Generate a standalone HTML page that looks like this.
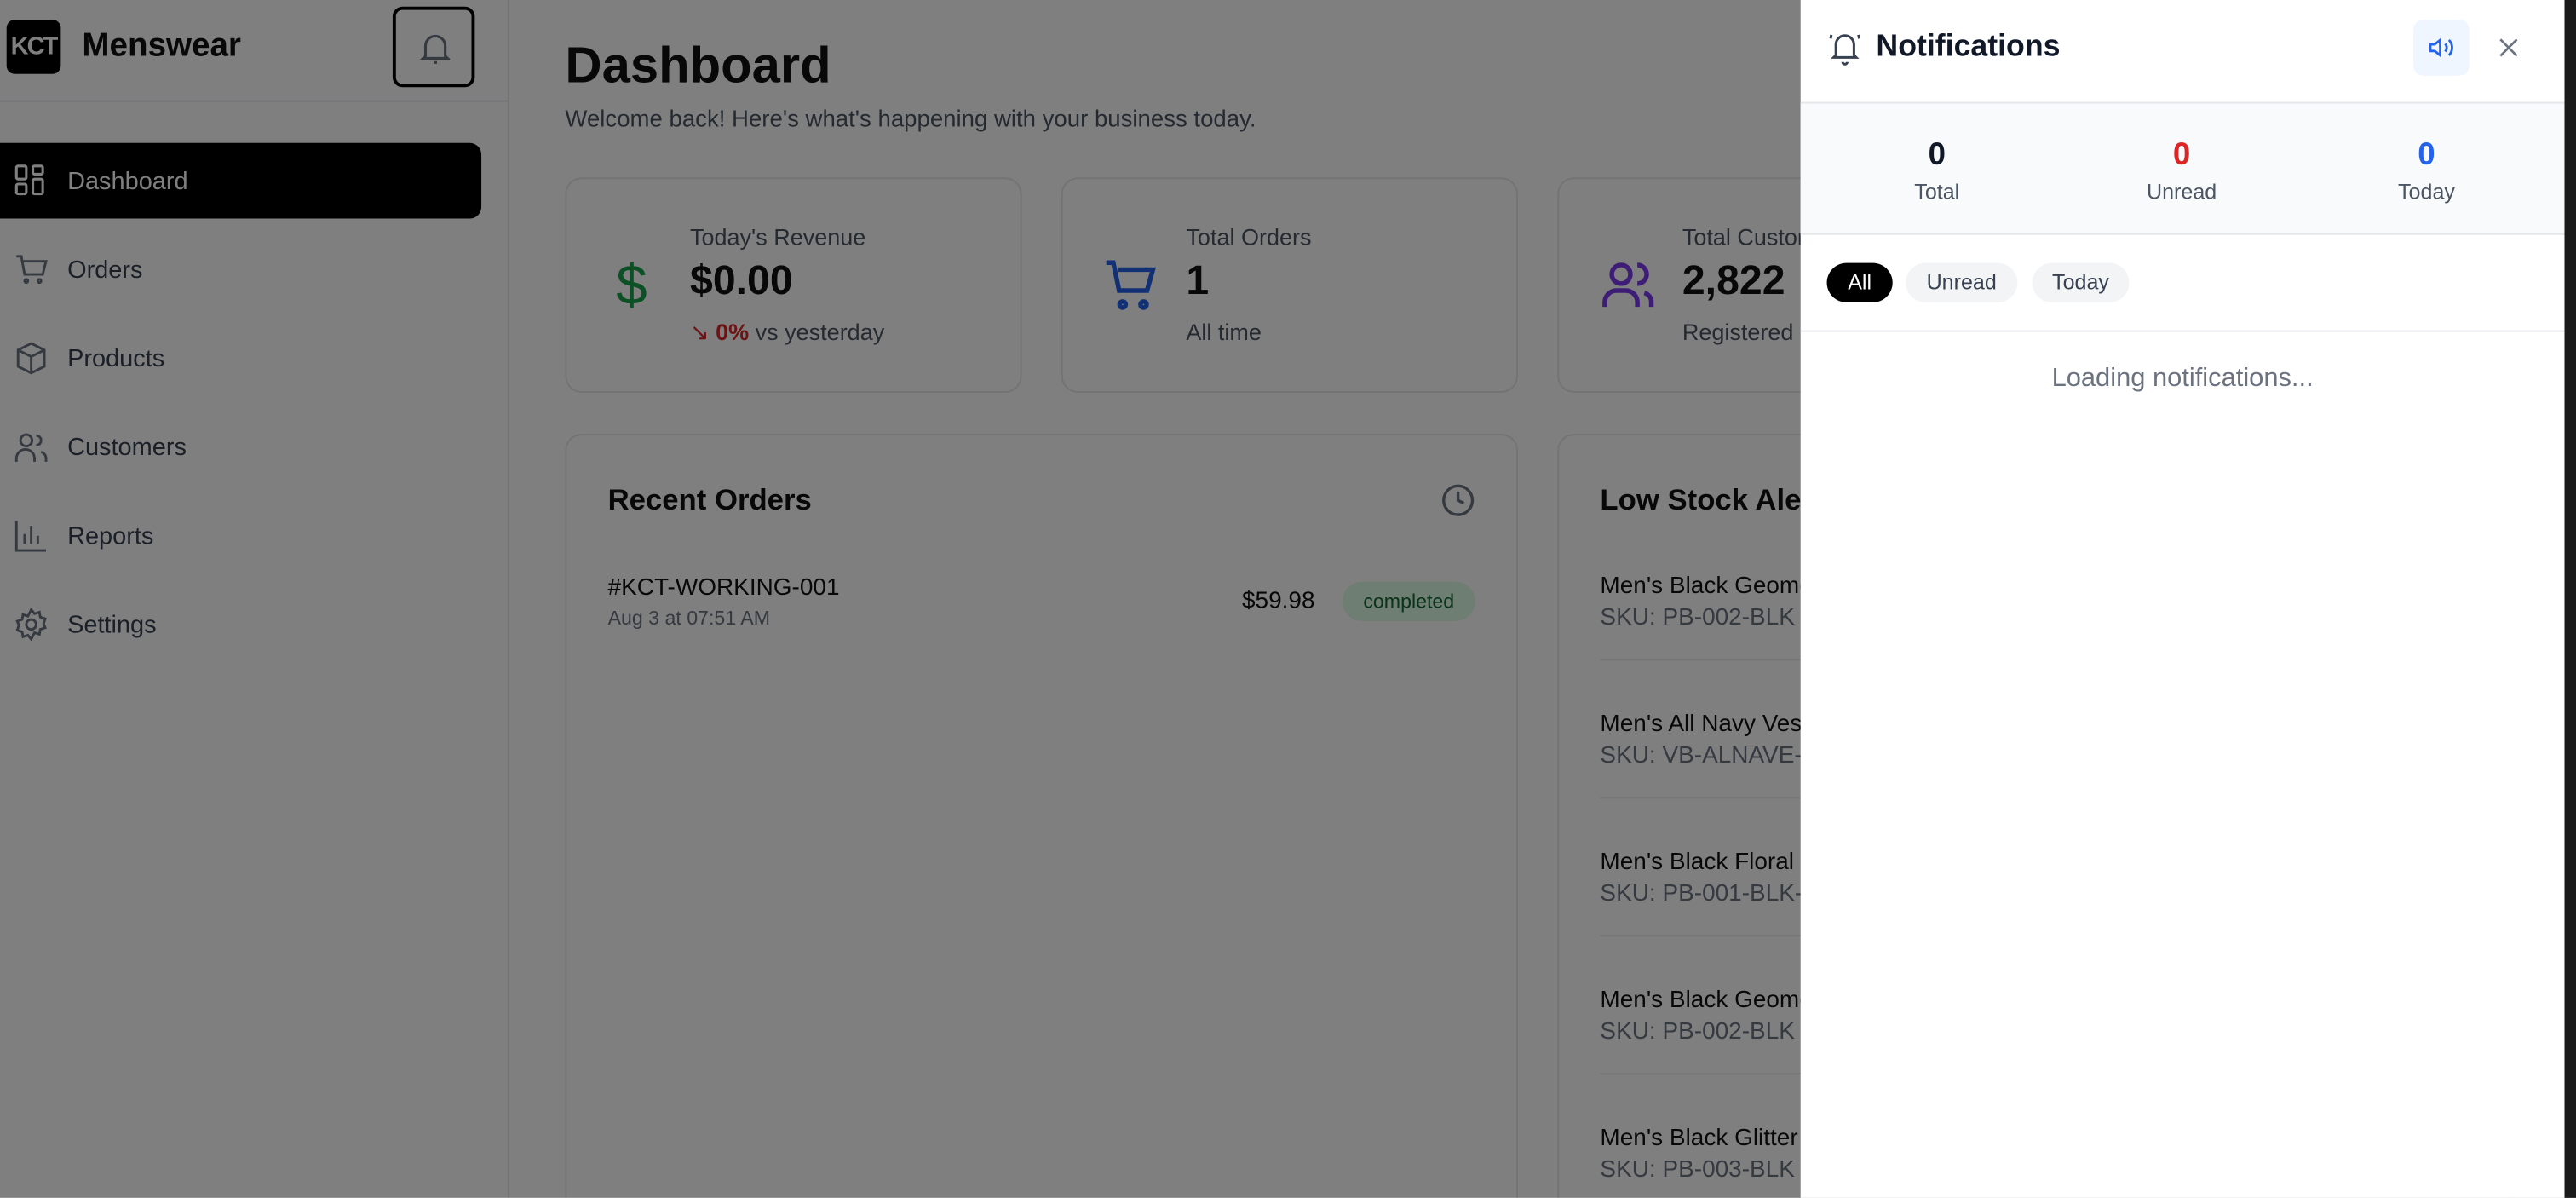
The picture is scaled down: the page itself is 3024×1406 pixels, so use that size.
<!DOCTYPE html>
<html><head><meta charset="utf-8"><style>
*{box-sizing:border-box;margin:0;padding:0}
html,body{width:3024px;height:1406px;overflow:hidden;background:#fff;font-family:"Liberation Sans",Arial,sans-serif}
#w{position:absolute;left:0;top:0;width:1568px;height:729px;transform:scale(1.928571);transform-origin:0 0;background:#fff;overflow:hidden}
.a{position:absolute}
.side{left:0;top:0;width:310px;height:729px;border-right:1px solid #e5e7eb;background:#fff}
.nav{position:absolute;left:0;width:293px;height:46px;display:flex;align-items:center;padding-left:41px;font-size:15px;color:#374151}
.nav svg{position:absolute;left:9px;top:13px}
.card{position:absolute;border:1px solid #e5e7eb;border-radius:10px;background:#fff}
.t1{font-size:14px;color:#4b5563}
.big{font-size:25px;font-weight:bold;color:#111}
.ls{position:absolute;left:974px;font-size:14.5px;color:#111}
.ls span{display:block;color:#6b7280;margin-top:3px}
.ln{position:absolute;left:974px;width:130px;height:1px;background:#e5e7eb}
</style></head><body><div id="w">
<div class="a side">
 <div class="a" style="left:4px;top:12px;width:33px;height:33px;background:#000;border-radius:5px;color:#fff;font-weight:bold;font-size:15px;line-height:33px;text-align:center;letter-spacing:-1px">KCT</div>
 <div class="a" style="left:50px;top:17px;font-size:20px;font-weight:bold;color:#111">Menswear</div>
 <div class="a" style="left:239px;top:4px;width:50px;height:49px;border:2px solid #000;border-radius:6px"><svg class="a" style="left:12px;top:11px" width="24" height="24" viewBox="0 0 24 24" fill="none" stroke="#6b7280" stroke-width="1.6"><path d="M6 17V11a6 6 0 0 1 12 0v6l1.5 1.5h-15z"/><path d="M11 21h2"/></svg></div>
 <div class="a" style="left:0;top:61px;width:310px;height:1px;background:#e5e7eb"></div>
 <div class="nav" style="top:87px;background:#000;color:#fff;border-radius:0 7px 7px 0"><svg width="20" height="20" viewBox="0 0 20 20" fill="none" stroke="#fff" stroke-width="1.6"><rect x="1" y="1" width="6" height="8" rx="1"/><rect x="11" y="1" width="6" height="5" rx="1"/><rect x="1" y="12" width="6" height="6" rx="1"/><rect x="11" y="9" width="6" height="9" rx="1"/></svg>Dashboard</div>
 <div class="nav" style="top:141px"><svg width="20" height="20" viewBox="0 0 20 20" fill="none" stroke="#6b7280" stroke-width="1.5"><path d="M1 2h3l2 11h11l2-8H5"/><circle cx="7" cy="17" r="1"/><circle cx="15" cy="17" r="1"/></svg>Orders</div>
 <div class="nav" style="top:195px"><svg width="20" height="20" viewBox="0 0 20 20" fill="none" stroke="#6b7280" stroke-width="1.5"><path d="M10 1l8 4v10l-8 4-8-4V5z M2 5l8 4 8-4 M10 9v10"/></svg>Products</div>
 <div class="nav" style="top:249px"><svg width="20" height="20" viewBox="0 0 20 20" fill="none" stroke="#6b7280" stroke-width="1.5"><circle cx="7" cy="6" r="3.5"/><path d="M1 19v-2a5 5 0 0 1 11 0v2M13 3a3 3 0 0 1 0 6M16 13a4 4 0 0 1 3 4v2"/></svg>Customers</div>
 <div class="nav" style="top:303px"><svg width="20" height="20" viewBox="0 0 20 20" fill="none" stroke="#6b7280" stroke-width="1.5"><path d="M1 1v18h18M6 15V9M10 15V4M14 15V10"/></svg>Reports</div>
 <div class="nav" style="top:357px"><svg width="20" height="20" viewBox="0 0 20 20" fill="none" stroke="#6b7280" stroke-width="1.5"><circle cx="10" cy="10" r="3"/><path d="M10 1l2 2.5 3-1 .5 3 3 1-1 3 1 2.5-3 1-.5 3-3-1L10 19l-2-2.5-3 1-.5-3-3-1 1-3-1-2.5 3-1 .5-3 3 1z"/></svg>Settings</div>
</div>
<div class="a" style="left:344px;top:22px;font-size:31px;font-weight:bold;color:#111">Dashboard</div>
<div class="a" style="left:344px;top:65px;font-size:14.3px;color:#4b5563">Welcome back! Here's what's happening with your business today.</div>
<div class="card" style="left:344px;top:108px;width:278px;height:131px">
 <div class="a" style="left:30px;top:46px;font-size:34px;color:#16a34a">$</div>
 <div class="a t1" style="left:75px;top:27px">Today's Revenue</div>
 <div class="a big" style="left:75px;top:48px">$0.00</div>
 <div class="a t1" style="left:75px;top:85px"><span style="color:#dc2626">↘ <b>0%</b></span> vs yesterday</div>
</div>
<div class="card" style="left:646px;top:108px;width:278px;height:131px">
 <svg class="a" style="left:25px;top:48px" width="34" height="34" viewBox="0 0 24 24" fill="none" stroke="#2563eb" stroke-width="2"><path d="M1 2h3l2.5 12h12l2.5-9H6"/><circle cx="8" cy="20" r="1.3"/><circle cx="17" cy="20" r="1.3"/></svg>
 <div class="a t1" style="left:75px;top:27px">Total Orders</div>
 <div class="a big" style="left:75px;top:48px">1</div>
 <div class="a t1" style="left:75px;top:85px">All time</div>
</div>
<div class="card" style="left:948px;top:108px;width:278px;height:131px">
 <svg class="a" style="left:25px;top:48px" width="34" height="34" viewBox="0 0 24 24" fill="none" stroke="#7c3aed" stroke-width="2"><circle cx="9" cy="7" r="4"/><path d="M2 21v-2a5 5 0 0 1 5-5h4a5 5 0 0 1 5 5v2M16 3a4 4 0 0 1 0 8M22 21v-2a4 4 0 0 0-3-4"/></svg>
 <div class="a t1" style="left:75px;top:27px">Total Customers</div>
 <div class="a big" style="left:75px;top:48px">2,822</div>
 <div class="a t1" style="left:75px;top:85px">Registered users</div>
</div>
<div class="card" style="left:344px;top:264px;width:580px;height:500px">
 <div class="a" style="left:25px;top:29px;font-size:18px;font-weight:bold;color:#111">Recent Orders</div>
 <svg class="a" style="left:532px;top:29px" width="21" height="21" viewBox="0 0 24 24" fill="none" stroke="#6b7280" stroke-width="2"><circle cx="12" cy="12" r="10"/><path d="M12 6v6l4 2"/></svg>
 <div class="a" style="left:25px;top:85px;font-size:14.5px;color:#111">#KCT-WORKING-001</div>
 <div class="a" style="left:25px;top:104px;font-size:12px;color:#6b7280">Aug 3 at 07:51 AM</div>
 <div class="a" style="left:411px;top:93px;font-size:14.5px;color:#111">$59.98</div>
 <div class="a" style="left:472px;top:89px;width:81px;height:24px;line-height:24px;text-align:center;border-radius:12px;background:#dcfce7;color:#166534;font-size:12px">completed</div>
</div>
<div class="card" style="left:948px;top:264px;width:580px;height:500px">
 <div class="a" style="left:25px;top:29px;font-size:18px;font-weight:bold;color:#111">Low Stock Alerts</div>
</div>
<div class="ls" style="top:349px">Men's Black Geometric<span>SKU: PB-002-BLK</span></div><div class="ln" style="top:401px"></div>
<div class="ls" style="top:433px">Men's All Navy Vest<span>SKU: VB-ALNAVE-1</span></div><div class="ln" style="top:485px"></div>
<div class="ls" style="top:517px">Men's Black Floral<span>SKU: PB-001-BLK-1</span></div><div class="ln" style="top:569px"></div>
<div class="ls" style="top:601px">Men's Black Geometric<span>SKU: PB-002-BLK</span></div><div class="ln" style="top:653px"></div>
<div class="ls" style="top:685px">Men's Black Glitter<span>SKU: PB-003-BLK</span></div>
<div class="a" style="left:0;top:0;width:1568px;height:729px;background:rgba(0,0,0,.5)"></div>
<div class="a" style="left:1096px;top:0;width:465px;height:729px;background:#fff">
 <svg class="a" style="left:16px;top:18px" width="22" height="22" viewBox="0 0 24 24" fill="none" stroke="#374151" stroke-width="1.7"><path d="M6 17V10a6 6 0 0 1 12 0v7l1.5 1.5h-15z"/><path d="M10.5 21.5a1.5 1.5 0 0 0 3 0M3 3.5 2.5 6M21 3.5l.5 2.5"/></svg>
 <div class="a" style="left:46px;top:17px;font-size:18.5px;font-weight:bold;color:#111827">Notifications</div>
 <div class="a" style="left:373px;top:12px;width:34px;height:34px;background:#eff6ff;border-radius:6px"><svg class="a" style="left:9px;top:9px" width="16" height="16" viewBox="0 0 24 24" fill="none" stroke="#2563eb" stroke-width="2.2"><path d="M11 5 6 9H2v6h4l5 4z M15.5 8.5a5 5 0 0 1 0 7M19 5a10 10 0 0 1 0 14"/></svg></div>
 <svg class="a" style="left:424px;top:22px" width="14" height="14" viewBox="0 0 14 14" stroke="#6b7280" stroke-width="1.4"><path d="M2 2l10 10M12 2 2 12"/></svg>
 <div class="a" style="left:0;top:62px;width:465px;height:81px;background:#f9fafb;border-top:1px solid #e5e7eb;border-bottom:1px solid #e5e7eb"></div>
 <div class="a" style="left:33px;top:84px;width:100px;text-align:center;font-size:19px;font-weight:bold;color:#111827">0</div>
 <div class="a" style="left:33px;top:109px;width:100px;text-align:center;font-size:13px;color:#4b5563">Total</div>
 <div class="a" style="left:182px;top:84px;width:100px;text-align:center;font-size:19px;font-weight:bold;color:#dc2626">0</div>
 <div class="a" style="left:182px;top:109px;width:100px;text-align:center;font-size:13px;color:#4b5563">Unread</div>
 <div class="a" style="left:331px;top:84px;width:100px;text-align:center;font-size:19px;font-weight:bold;color:#2563eb">0</div>
 <div class="a" style="left:331px;top:109px;width:100px;text-align:center;font-size:13px;color:#4b5563">Today</div>
 <div class="a" style="left:16px;top:160px;width:40px;height:24px;border-radius:12px;background:#000;color:#fff;font-size:13px;line-height:24px;text-align:center">All</div>
 <div class="a" style="left:64px;top:160px;width:68px;height:24px;border-radius:12px;background:#f3f4f6;color:#374151;font-size:13px;line-height:24px;text-align:center">Unread</div>
 <div class="a" style="left:141px;top:160px;width:59px;height:24px;border-radius:12px;background:#f3f4f6;color:#374151;font-size:13px;line-height:24px;text-align:center">Today</div>
 <div class="a" style="left:0;top:201px;width:465px;height:1px;background:#e5e7eb"></div>
 <div class="a" style="left:0;top:222px;width:465px;text-align:center;font-size:16px;color:#6b7280">Loading notifications...</div>
</div>
<div class="a" style="left:1561px;top:0;width:7px;height:729px;background:#1a1a1a"></div>
</div></body></html>
